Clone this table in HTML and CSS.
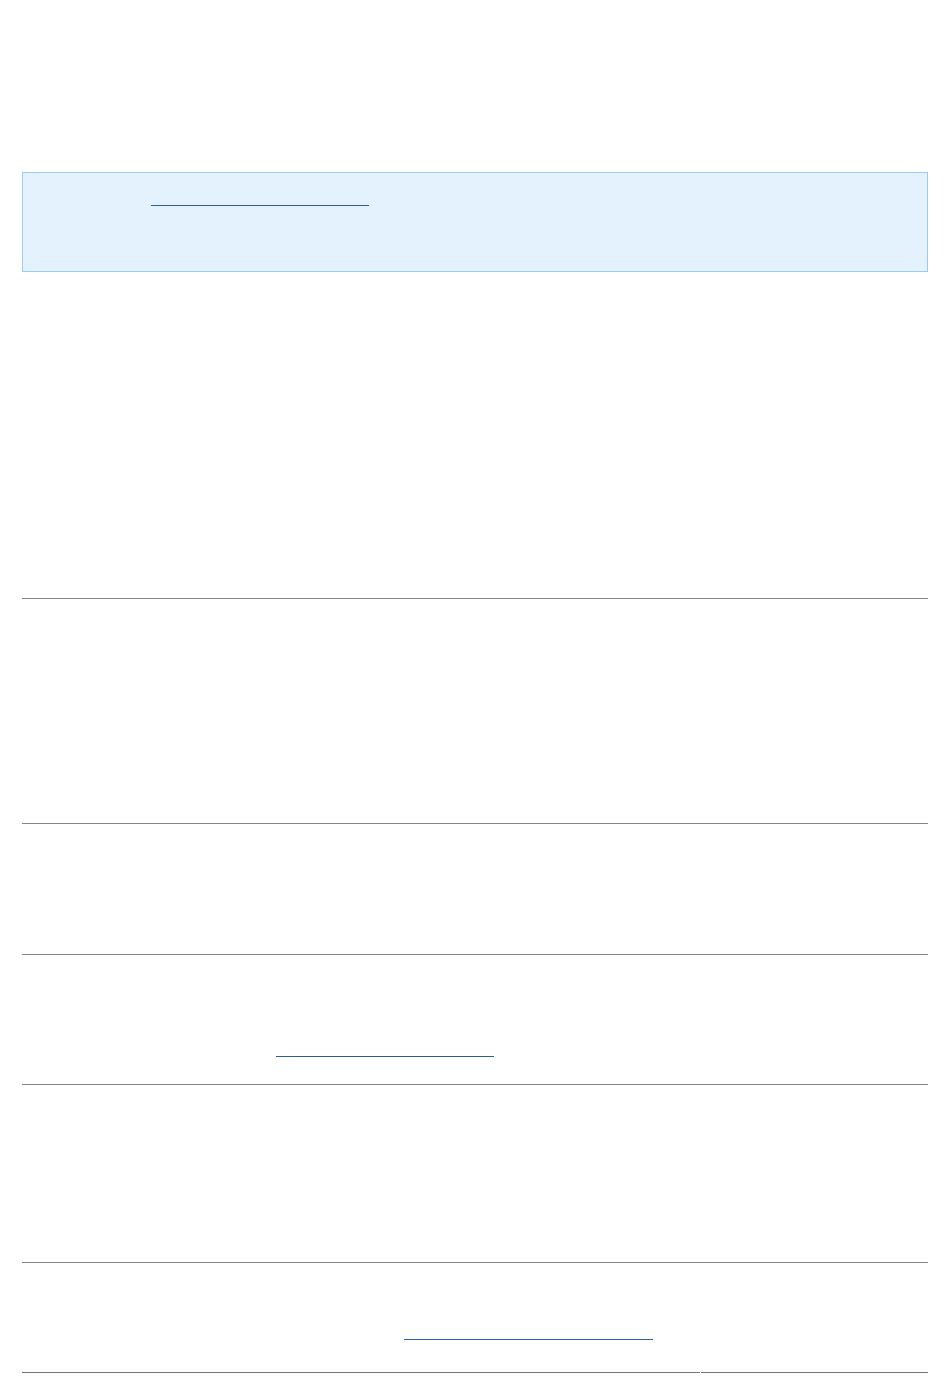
FILE: index.html
```html
<!DOCTYPE html>
<html lang="en">
<head>
<meta charset="utf-8">
<title>Project overview</title>
<link rel="stylesheet" href="styles.css">
</head>
<body>
<main class="page">
  <header class="masthead">
    <h1 class="title">Project overview</h1>
    <p class="subtitle">Documentation, releases and contact details for the project.</p>
  </header>

  <div class="notice">
    <p class="notice-text"><span class="lead lead-notice">Please note:</span><a class="link link-a" href="#">docs.example.org/moved</a> now hosts the current documentation.</p>
    <p class="notice-text">Pages on this site are kept for reference and are no longer updated.</p>
  </div>

  <section class="block block-intro">
    <h2 class="block-title">About</h2>
    <p class="text">This project provides a small set of tools for building, testing and publishing packages. It is maintained by a group of volunteers and released under an open licence.</p>
    <p class="text">The sections below list the main resources, the current release, how to report problems and how to reach the maintainers.</p>
  </section>

  <section class="block block-res">
    <h3 class="row-title">Resources</h3>
    <p class="text">User guide, API reference, tutorials and frequently asked questions are available in the documentation.</p>
    <p class="text">Older material is archived and can be requested from the maintainers.</p>
  </section>

  <section class="block block-rel">
    <h3 class="row-title">Current release</h3>
    <p class="text">Version 4.2.1, published 12 March, with changelog and checksums.</p>
  </section>

  <section class="block block-src">
    <h3 class="row-title">Source code</h3>
    <p class="text">The repository is public and accepts contributions.<br><span class="lead lead-src">Browse the code at</span><a class="link link-b" href="#">code.example.org/project</a></p>
  </section>

  <section class="block block-bug">
    <h3 class="row-title">Reporting problems</h3>
    <p class="text">Search the issue tracker before opening a new report, and include the version number and steps to reproduce.</p>
  </section>

  <section class="split">
    <div class="cell cell-main">
      <h3 class="row-title">Contact</h3>
      <p class="text"><span class="lead lead-contact">Write to the maintainers at the mailing list</span><a class="link link-c" href="#">lists.example.org/project-dev</a></p>
    </div>
    <div class="cell cell-side">
      <p class="text">Last updated 2024</p>
    </div>
  </section>
</main>
</body>
</html>
```

FILE: styles.css
```css
html, body {
  margin: 0;
  padding: 0;
  background: #ffffff;
}

body {
  font-family: "Liberation Sans", Arial, sans-serif;
  font-size: 16px;
  line-height: 24px;
  color: transparent;
}

.page {
  padding: 0 22px 0 22px;
}

.masthead {
  height: 172px;
  box-sizing: border-box;
  padding-top: 40px;
}

.title {
  margin: 0 0 12px;
  font-size: 32px;
  line-height: 40px;
  font-weight: bold;
}

.subtitle {
  margin: 0;
}

.notice {
  height: 100px;
  box-sizing: border-box;
  background: #e3f2fd;
  border: 1px solid #9ccbf8;
  padding: 13px 15px 0;
}

.notice-text {
  margin: 0;
  white-space: nowrap;
  overflow: hidden;
}

.notice-text + .notice-text {
  margin-top: 6px;
}

.lead {
  display: inline-block;
  vertical-align: top;
  white-space: nowrap;
  overflow: hidden;
}

.lead-notice { width: 113px; }
.lead-src { width: 254px; }
.lead-contact { width: 382px; }

.link {
  display: inline-block;
  vertical-align: top;
  height: 19px;
  border-bottom: 1px solid #2f5f93;
  color: transparent;
  text-decoration: none;
  white-space: nowrap;
  overflow: hidden;
}

.link-a { width: 218px; }
.link-b { width: 218px; }
.link-c { width: 249px; border-bottom-color: #2a64a8; }

.block {
  box-sizing: border-box;
  border-bottom: 1px solid #858585;
  padding-top: 22px;
  overflow: hidden;
}

.block-intro { height: 327px; padding-top: 28px; }
.block-res { height: 225px; }
.block-rel { height: 131px; }
.block-src { height: 130px; padding-top: 24px; }
.block-bug { height: 178px; }

.block-title {
  margin: 0 0 12px;
  font-size: 24px;
  line-height: 32px;
}

.row-title {
  margin: 0 0 10px;
  font-size: 18px;
  line-height: 24px;
}

.text {
  margin: 0;
}

.text + .text {
  margin-top: 12px;
}

.split {
  display: grid;
  grid-template-columns: 678px 1fr;
  column-gap: 1px;
  height: 110px;
}

.cell {
  box-sizing: border-box;
  border-bottom: 1px solid #747474;
  padding-top: 23px;
  overflow: hidden;
}

.cell-main .text {
  white-space: nowrap;
}
```
